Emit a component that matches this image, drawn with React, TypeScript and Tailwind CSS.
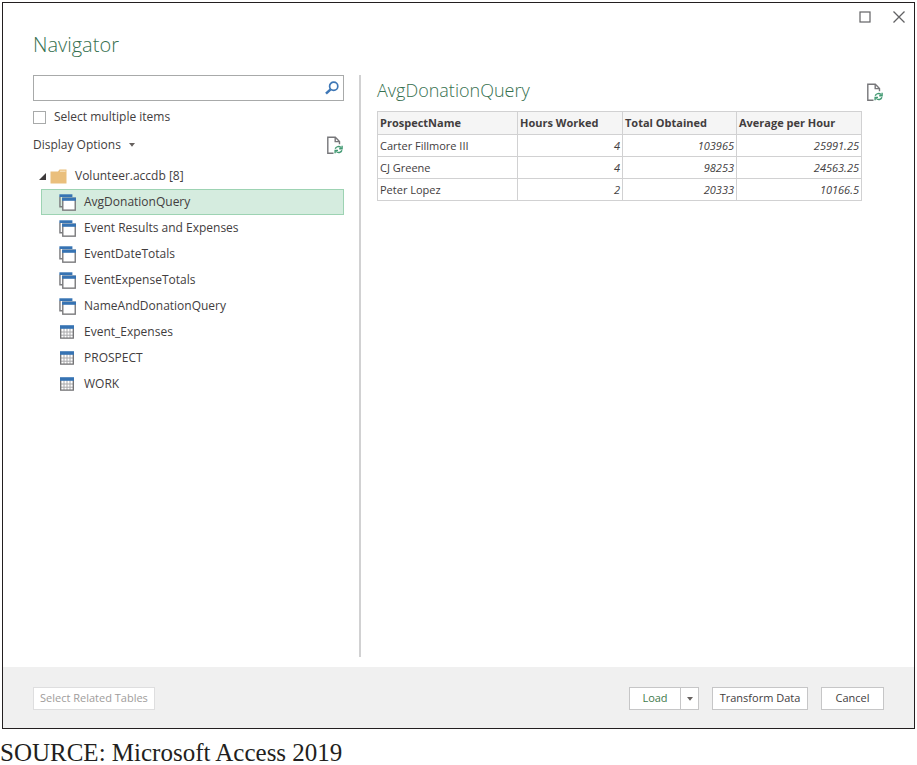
import { useState } from "react";

type ItemKind = "query" | "table";

const items: { name: string; kind: ItemKind }[] = [
  { name: "AvgDonationQuery", kind: "query" },
  { name: "Event Results and Expenses", kind: "query" },
  { name: "EventDateTotals", kind: "query" },
  { name: "EventExpenseTotals", kind: "query" },
  { name: "NameAndDonationQuery", kind: "query" },
  { name: "Event_Expenses", kind: "table" },
  { name: "PROSPECT", kind: "table" },
  { name: "WORK", kind: "table" },
];

const rows = [
  ["Carter Fillmore III", "4", "103965", "25991.25"],
  ["CJ Greene", "4", "98253", "24563.25"],
  ["Peter Lopez", "2", "20333", "10166.5"],
];

function QueryIcon() {
  return (
    <svg width="17" height="17" viewBox="0 0 18 18" fill="none" className="shrink-0">
      <path d="M1 3V13.5H4" stroke="#7b7b7d" strokeWidth="1.5" />
      <path d="M0.4 0.3H14.2V3.2H0.4Z" fill="#3673b3" />
      <rect x="4" y="4.5" width="13.2" height="12.6" fill="#fff" stroke="#7b7b7d" strokeWidth="1.5" />
      <path d="M3.3 3.8H18V7.2H3.3Z" fill="#3673b3" />
    </svg>
  );
}

function TableIcon() {
  return (
    <svg width="17" height="16" viewBox="0 0 17 16" fill="none" className="shrink-0">
      <rect x="1.7" y="3.5" width="12.6" height="11" fill="#fff" />
      <path d="M2 8H14M2 11.2H14M5 4V14M8 4V14M11 4V14" stroke="#a9a9ab" />
      <path d="M1.7 3.5V14.2H14.3V3.5" stroke="#6f6f71" strokeWidth="1.3" />
      <path d="M1 1.2H15V4.8H1Z" fill="#3673b3" />
    </svg>
  );
}

function RefreshPageIcon() {
  return (
    <svg width="18" height="19" viewBox="0 0 18 19" fill="none" className="shrink-0">
      <path d="M7.5 17.3H1.8V1.3H9.3L13.5 5.5V8.2" stroke="#77777a" strokeWidth="1.4" />
      <path d="M9.2 1.5V5.6H13.4" stroke="#77777a" strokeWidth="1.4" />
      <path d="M9.3 12.7C9.9 10.5 13.3 9.7 15 11.6M16.1 9.8V12.7H13.2" stroke="#439a73" strokeWidth="1.4" />
      <path d="M15.9 14.3C15.3 16.6 11.9 17.4 10.2 15.4M9.1 17.3V14.4H12" stroke="#439a73" strokeWidth="1.4" />
    </svg>
  );
}

function Caret() {
  return (
    <svg width="6" height="4" viewBox="0 0 6 4" className="shrink-0">
      <path d="M0 0H6L3 3.8Z" fill="#66615f" />
    </svg>
  );
}

export default function App() {
  const [selected, setSelected] = useState("AvgDonationQuery");

  return (
    <div className="flex min-h-screen flex-col bg-white font-['Open_Sans','Noto_Sans',sans-serif] text-xs text-[#423d3e]">
      <main className="mx-0.5 mt-0.5 flex flex-1 flex-col border border-[#231f20]">
        <div className="flex h-7 justify-end gap-5 pt-1.5 pr-2">
          <button type="button" aria-label="Maximize" className="h-4">
            <svg width="14" height="14" viewBox="0 0 14 14" fill="none">
              <rect x="2" y="2" width="10" height="10" stroke="#626264" strokeWidth="1.2" />
            </svg>
          </button>
          <button type="button" aria-label="Close" className="h-4">
            <svg width="14" height="14" viewBox="0 0 14 14" fill="none">
              <path d="M1.5 1.5L12.5 12.5M12.5 1.5L1.5 12.5" stroke="#626264" strokeWidth="1.3" />
            </svg>
          </button>
        </div>
        <h1 className="h-11 px-[30px] text-xl leading-7 font-light text-[#36704f]">Navigator</h1>

        <div className="flex flex-1 px-[30px] pb-2.5">
          <section className="w-[328px] shrink-0 border-r-2 border-[#d1d1d2] pr-[15px]">
            <div className="flex h-[26px] items-center border border-[#a8aaaa] pr-1">
              <input type="text" aria-label="Search" className="h-full min-w-0 flex-1 px-2 outline-none" />
              <button type="button" aria-label="Search items">
                <svg width="14" height="14" viewBox="0 0 14 14" fill="none">
                  <circle cx="8.7" cy="5.2" r="4.1" stroke="#3e77b6" strokeWidth="1.7" />
                  <path d="M5.6 8.3L1 12.7" stroke="#3e77b6" strokeWidth="2.5" />
                </svg>
              </button>
            </div>
            <label className="mt-1.5 flex h-5 items-center gap-2">
              <input type="checkbox" className="size-[13px] appearance-none border border-[#a8aaaa] bg-white checked:bg-[#3f7a5c]" />
              Select multiple items
            </label>
            <div className="mt-1 flex h-7 items-center justify-between">
              <button type="button" className="flex items-center gap-2">
                Display Options
                <Caret />
              </button>
              <button type="button" aria-label="Refresh list">
                <RefreshPageIcon />
              </button>
            </div>
            <div className="mt-1 flex h-[26px] items-center pl-1.5">
              <svg width="7" height="7" viewBox="0 0 7 7" className="mr-1 shrink-0">
                <path d="M7 0V7H0Z" fill="#3d3a3b" />
              </svg>
              <svg width="17" height="15" viewBox="0 0 17 15" className="mr-2 shrink-0">
                <path d="M0.5 2.5H8L9.5 0.5H16.5V14.5H0.5Z" fill="#eabf7c" />
                <path d="M10 2.2H15.5" stroke="#fbeed6" strokeWidth="0.9" />
              </svg>
              Volunteer.accdb [8]
            </div>
            <ul className="ml-2">
              {items.map((item) => (
                <li key={item.name}>
                  <button
                    type="button"
                    onClick={() => setSelected(item.name)}
                    className={
                      "flex h-[26px] w-full items-center gap-2 border pl-[17px] text-left " +
                      (item.name === selected ? "border-[#9dd3b3] bg-[#d5ecdf]" : "border-transparent")
                    }
                  >
                    {item.kind === "query" ? <QueryIcon /> : <TableIcon />}
                    {item.name}
                  </button>
                </li>
              ))}
            </ul>
          </section>

          <section className="min-w-0 flex-1 pl-4">
            <div className="flex h-9 items-start justify-between">
              <h2 className="pt-px text-lg leading-7 font-light text-[#36704f]">AvgDonationQuery</h2>
              <button type="button" aria-label="Refresh preview" className="pt-2">
                <RefreshPageIcon />
              </button>
            </div>
            <div className="pr-[23px]">
              <table className="w-full table-fixed border-collapse text-[11px] leading-4">
                <colgroup>
                  <col className="w-[140px]" />
                  <col className="w-[105px]" />
                  <col className="w-[114px]" />
                  <col className="w-[125px]" />
                </colgroup>
                <thead>
                  <tr className="h-[23px] bg-[#f5f5f5] text-left">
                    {["ProspectName", "Hours Worked", "Total Obtained", "Average per Hour"].map((h) => (
                      <th key={h} className="border border-[#d1d1d2] px-0.5 font-bold whitespace-nowrap">
                        {h}
                      </th>
                    ))}
                  </tr>
                </thead>
                <tbody>
                  {rows.map((row) => (
                    <tr key={row[0]} className="h-[22px]">
                      {row.map((cell, i) => (
                        <td
                          key={i}
                          className={"border border-[#d1d1d2] px-0.5 " + (i === 0 ? "" : "text-right font-medium italic")}
                        >
                          {cell}
                        </td>
                      ))}
                    </tr>
                  ))}
                </tbody>
              </table>
            </div>
          </section>
        </div>

        <footer className="flex h-[61px] items-center bg-[#f0f0f0] px-[30px] text-[11px]">
          <button type="button" disabled className="mt-0.5 h-[23px] border border-[#dededf] bg-white px-1.5 text-[#a09c9b]">
            Select Related Tables
          </button>
          <div className="mt-0.5 ml-auto flex gap-[13px]">
            <div className="flex h-[23px] border border-[#c6c6c7] bg-white">
              <button type="button" className="w-[51px] border-r border-[#c6c6c7] text-[#3f7a4c]">
                Load
              </button>
              <button type="button" aria-label="Load options" className="flex w-[17px] items-center justify-center">
                <Caret />
              </button>
            </div>
            <button type="button" className="h-[23px] w-24 border border-[#c6c6c7] bg-white">
              Transform Data
            </button>
            <button type="button" className="h-[23px] w-[63px] border border-[#c6c6c7] bg-white">
              Cancel
            </button>
          </div>
        </footer>
      </main>
      <p className="pt-3 font-['Liberation_Serif',serif] text-[25px] leading-6 text-[#231f20]">SOURCE: Microsoft Access 2019</p>
    </div>
  );
}
